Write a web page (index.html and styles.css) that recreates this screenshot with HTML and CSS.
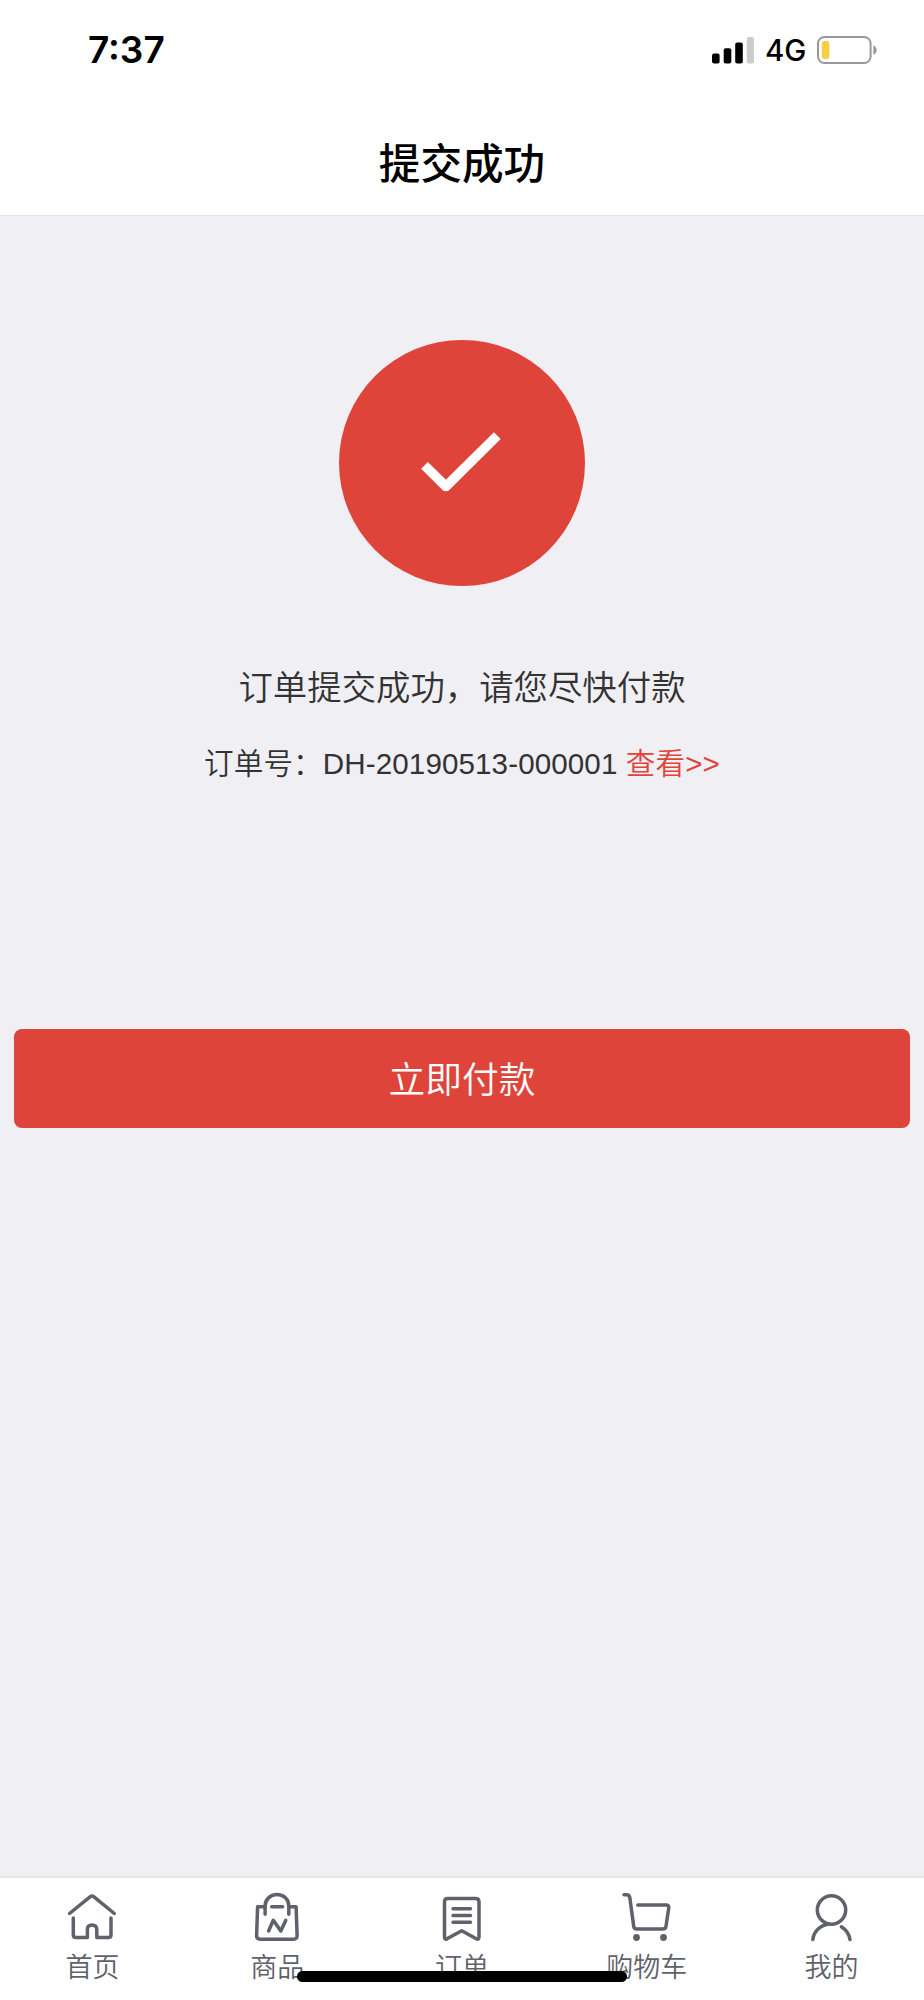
FILE: index.html
```html
<!DOCTYPE html>
<html lang="zh-CN">
<head>
  <meta charset="UTF-8" />
  <title>提交成功</title>
  <link rel="stylesheet" href="styles.css">
</head>
<body>

<div class="page">
  <header class="header">
    <div class="status-bar">
      <span class="time">7:37</span>
      <div class="status-right">
        <svg class="signal" width="42" height="28" viewBox="0 0 42 28">
          <rect x="0" y="17.5" width="7.6" height="10" rx="2" />
          <rect x="11.7" y="12.3" width="7.6" height="15.2" rx="2" />
          <rect x="23.2" y="6.5" width="7.6" height="21" rx="2" />
          <rect x="34.8" y="1" width="7.2" height="26.5" rx="2" fill="#ccc" />
        </svg>
        <span class="network">4G</span>
        <svg class="battery" width="61" height="28" viewBox="0 0 61 28">
          <rect x="1" y="1" width="52.6" height="26" rx="6.5" fill="none" stroke="#999" stroke-width="2" />
          <rect x="4.8" y="5" width="7.6" height="18" rx="3" fill="#f7ce46" />
          <path d="M56.4 9.2c4.3 2 4.3 7.6 0 9.6z" fill="#999" />
        </svg>
      </div>
    </div>
    <h1 class="title">提交成功</h1>
  </header>

  <main class="content">
    <div class="success-icon">
      <svg width="246" height="246" viewBox="0 0 246 246">
        <path d="M85.5 125.4L106.9 146.5L158.3 95.6" fill="none" stroke="#fff" stroke-width="9.6" stroke-linejoin="round" />
      </svg>
    </div>
    <p class="message">订单提交成功，请您尽快付款</p>
    <p class="order-no">订单号：DH-20190513-000001 <a class="link">查看&gt;&gt;</a></p>
    <button class="pay-btn">立即付款</button>
  </main>

  <nav class="tabbar">
    <div class="tab">
      <svg class="icon" viewBox="0 0 60 60">
        <path d="M7.5 25.5L28.3 8.7Q30 7.2 31.7 8.7L52.3 25.5" />
        <path d="M11.3 30V46.7Q11.3 49.5 14.1 49.5H25.4V41.5Q25.4 37 30 37T34.8 41.5V49.5H46.2Q49 49.5 49 46.7V30" />
      </svg>
      <span>首页</span>
    </div>
    <div class="tab">
      <svg class="icon" viewBox="0 0 60 60">
        <path d="M18.1 18.7H10.6L9.6 47.6Q9.6 51.3 13.2 51.3H46.4Q50.2 51.3 50.1 47.6L49.1 18.7H41.8" />
        <path d="M18.1 26.3V18C18.1 11.5 23.3 6.6 30 6.6S41.8 11.5 41.8 18V26.3" />
        <path d="M24.7 18.7H35.6M21.6 43L26.3 32.3L33.8 43L38.8 32.3" />
      </svg>
      <span>商品</span>
    </div>
    <div class="tab">
      <svg class="icon" viewBox="0 0 60 60">
        <path d="M15.7 10.4H43.6Q47 10.4 47 13.8V49Q47 52 44.3 50.8L29.7 42.8L15 50.8Q12.5 52 12.5 49V13.8Q12.5 10.4 15.7 10.4Z" />
        <path d="M21 20.7H38.5M21 27.5H38.5M21 34.3H38.5" />
      </svg>
      <span>订单</span>
    </div>
    <div class="tab">
      <svg class="icon" viewBox="0 0 60 60">
        <path d="M7 6.8H9.4Q12.4 6.8 12.8 9.6L16.7 38.2Q17.1 41 20 41H45.8Q48.6 41 49 38.2L51.8 19.8Q52 17.1 49.2 17.1H20.8" />
        <circle class="dot" cx="19.5" cy="49.5" r="3.4" />
        <circle class="dot" cx="46.5" cy="49.5" r="3.4" />
      </svg>
      <span>购物车</span>
    </div>
    <div class="tab">
      <svg class="icon" viewBox="0 0 60 60">
        <circle cx="29.5" cy="22" r="14.2" />
        <path d="M26.5 36C18 37.5 11.8 43.5 10.8 51.5M39.4 38.8C44 41.8 47.2 46 48 51.5" />
      </svg>
      <span>我的</span>
    </div>
  </nav>

  <div class="home-indicator"></div>
</div>

</body>
</html>
```
FILE: styles.css
```css
* { box-sizing: border-box; }

body {
  margin: 0;
  background: #efeff4;
  color: #333;
  font-family: "Liberation Sans", "Noto Sans CJK SC", sans-serif;
  font-weight: 350;
}

.page {
  position: relative;
  display: flex;
  flex-direction: column;
  height: 2000px;
  overflow: hidden;
}

.header {
  height: 216px;
  background: #fff;
  border-bottom: 1px solid #e6e6ea;
}

.status-bar {
  display: flex;
  justify-content: space-between;
  height: 98px;
  padding: 0 46px 0 88px;
  color: #000;
  font-family: Inter, sans-serif;
}

.time {
  font-size: 37px;
  font-weight: 600;
  line-height: 99px;
}

.status-right {
  display: flex;
  align-items: center;
  padding-top: 1px;
}

.network {
  margin-left: 11px;
  width: 41px;
  font-size: 29.5px;
  font-weight: 500;
  line-height: 40px;
  padding-top: 1px;
  white-space: nowrap;
}

.battery {
  margin-left: 11px;
}

.title {
  margin: 36px 0 0;
  color: #000;
  font-size: 41.6px;
  font-weight: 500;
  line-height: 62px;
  text-align: center;
}

.content {
  flex: 1;
  display: flex;
  flex-direction: column;
  align-items: center;
  padding: 124px 14px 0;
}

.success-icon {
  width: 246px;
  height: 246px;
  border-radius: 50%;
  background: #df443b;
}

.message {
  margin: 77px 0 0;
  font-size: 34.4px;
  line-height: 50px;
}

.order-no {
  margin: 30px 0 0;
  font-size: 29.6px;
  line-height: 42px;
  letter-spacing: 0.1px;
}

.link {
  color: #df443b;
}

.pay-btn {
  width: 100%;
  height: 99px;
  margin-top: 244px;
  padding: 0 0 4px;
  border: 0;
  border-radius: 8px;
  background: #df443b;
  color: #fff;
  font-family: inherit;
  font-size: 36.7px;
  font-weight: inherit;
}

.tabbar {
  display: flex;
  height: 124px;
  background: #fff;
  border-top: 2px solid #e6e6e8;
}

.tab {
  flex: 1;
  display: flex;
  flex-direction: column;
  align-items: center;
  gap: 1px;
  padding-top: 10px;
  color: #5f616b;
  font-size: 27px;
  line-height: 38px;
}

.icon {
  width: 60px;
  height: 60px;
  fill: none;
  stroke: #5f616b;
  stroke-width: 3.5;
  stroke-linecap: round;
  stroke-linejoin: round;
}

.icon .dot {
  fill: #5f616b;
  stroke: none;
}

.home-indicator {
  position: absolute;
  left: 297px;
  bottom: 18px;
  width: 330px;
  height: 11px;
  border-radius: 6px;
  background: #000;
}
```
